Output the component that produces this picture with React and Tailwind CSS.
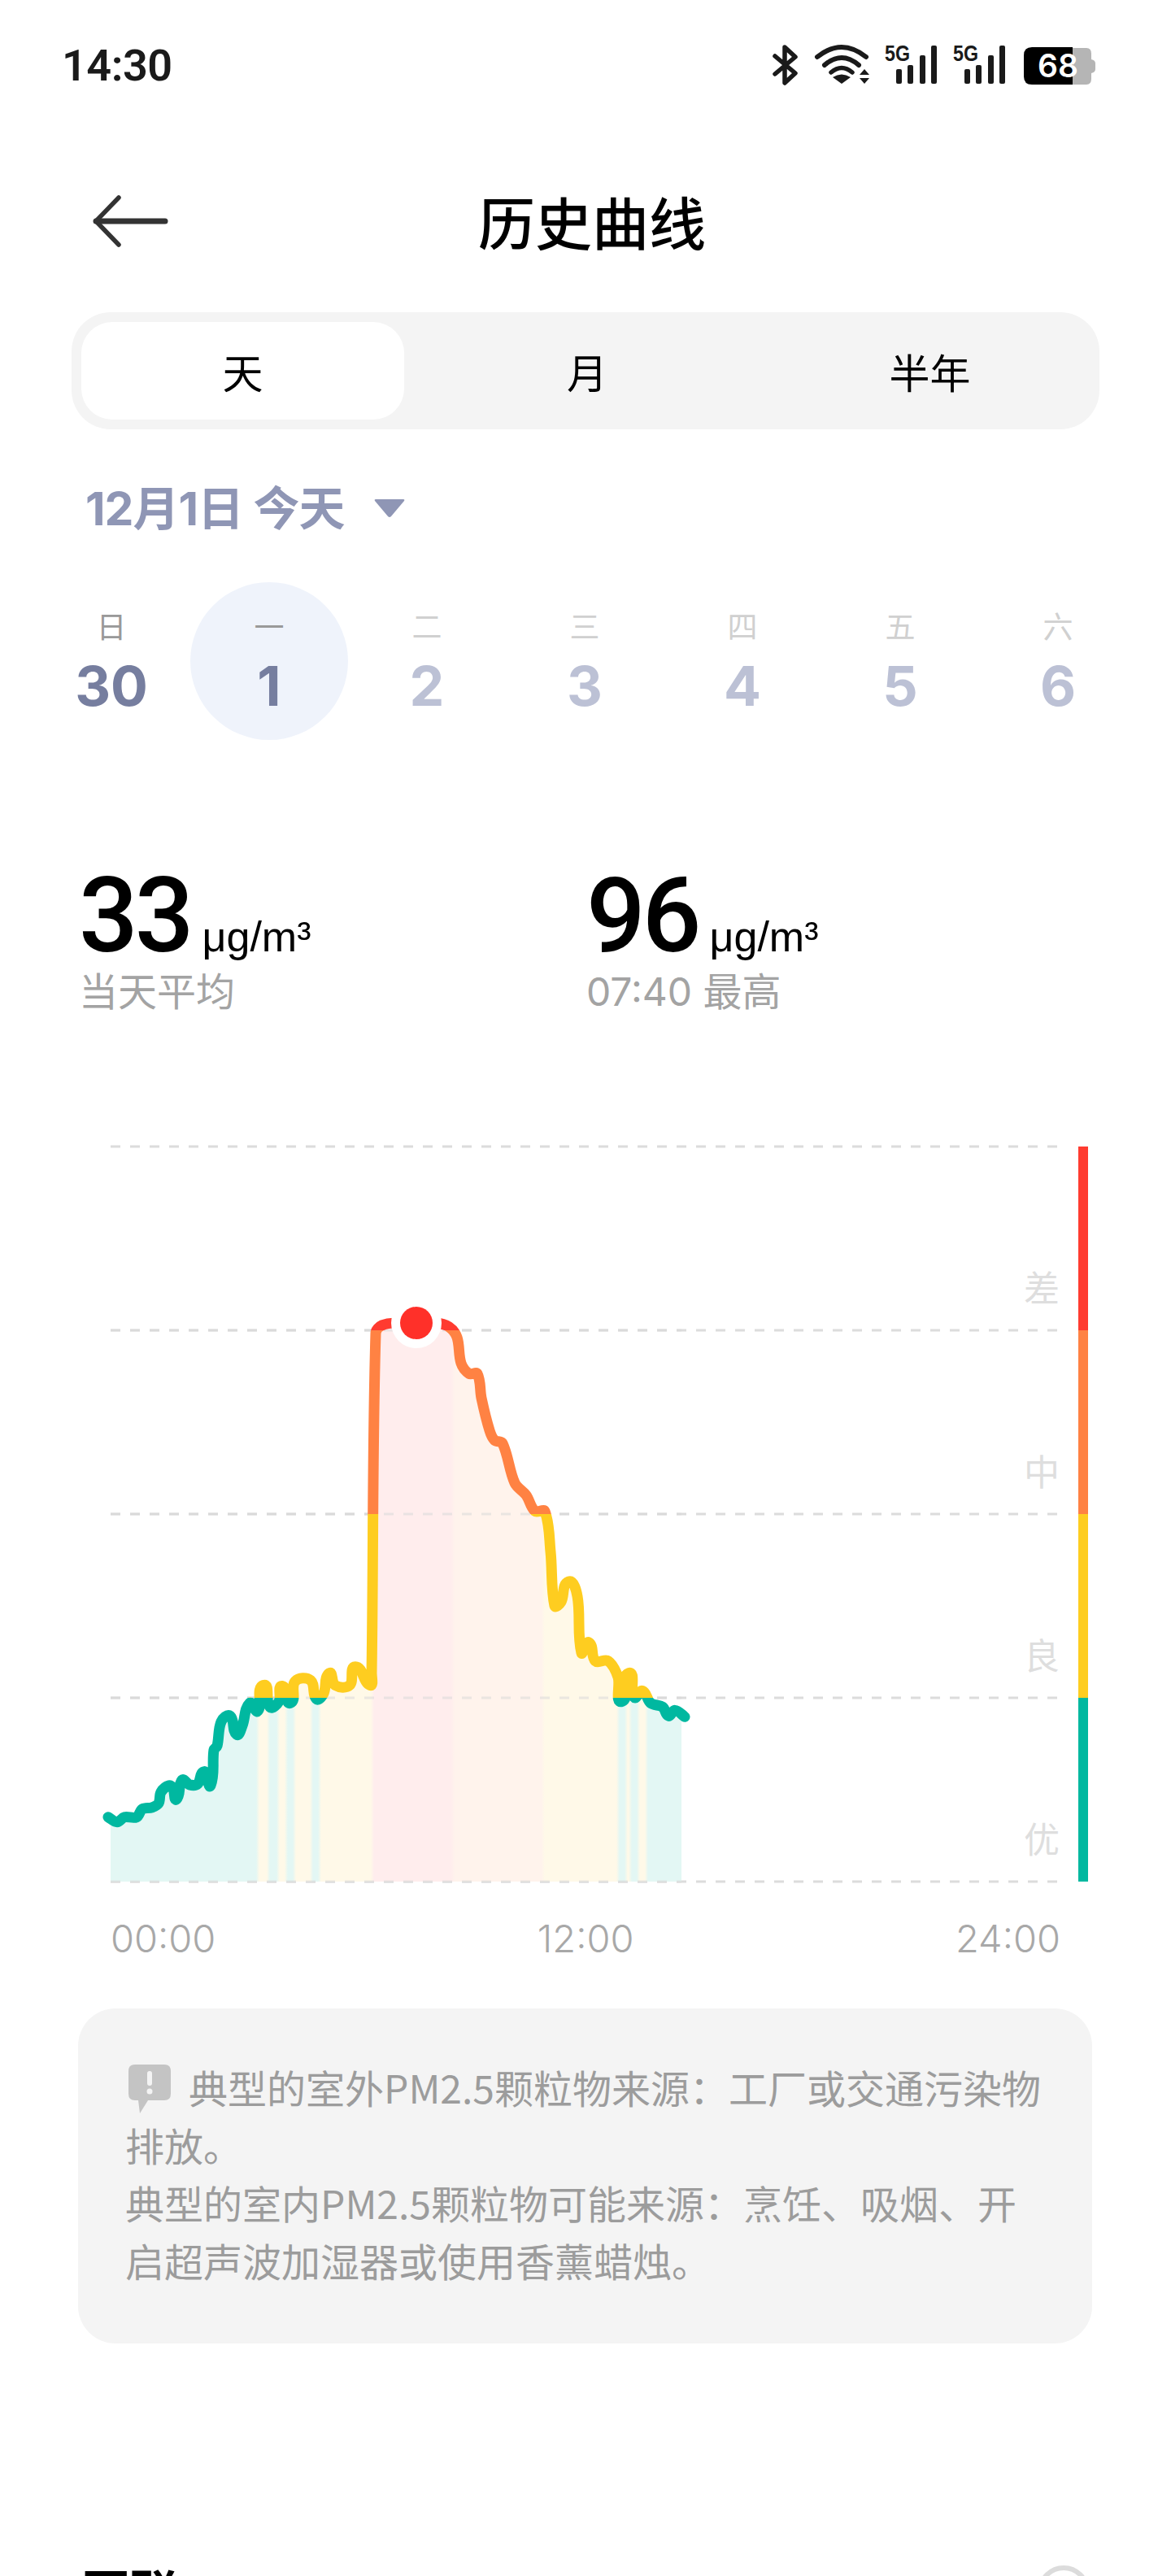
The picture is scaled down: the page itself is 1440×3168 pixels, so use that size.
import { useMemo } from "react"

const weekDays = [
  { label: "日", num: "30", past: true },
  { label: "一", num: "1", past: true, selected: true },
  { label: "二", num: "2" },
  { label: "三", num: "3" },
  { label: "四", num: "4" },
  { label: "五", num: "5" },
  { label: "六", num: "6" },
]

// curve points read off the reference, y squeezed a little to fit the 226px grid
const curve = [
  [133, 2238], [144, 2244], [153, 2238], [168, 2238], [175, 2228], [187, 2226], [195, 2221], [198, 2207],
  [208, 2199], [213, 2203], [217, 2216], [224, 2192], [233, 2198], [243, 2197], [248, 2184], [252, 2182],
  [259, 2199], [263, 2155], [267, 2150], [272, 2120], [283, 2113], [291, 2136], [298, 2125], [307, 2097],
  [317, 2107], [324, 2075], [332, 2102], [343, 2095], [347, 2076], [357, 2097], [363, 2070], [382, 2069],
  [389, 2092], [398, 2085], [405, 2060], [412, 2075], [430, 2075], [437, 2052], [455, 2075], [457, 2060],
  [462, 1640], [470, 1630], [490, 1627], [535, 1627], [552, 1632], [562, 1645], [567, 1677], [577, 1690],
  [587, 1690], [592, 1720], [602, 1760], [608, 1772], [618, 1776], [633, 1825], [647, 1840], [658, 1860],
  [670, 1860], [677, 1910], [682, 1977], [690, 1972], [699, 1947], [710, 1965], [715, 2035], [724, 2022],
  [732, 2045], [748, 2045], [760, 2065], [765, 2095], [773, 2060], [780, 2090], [790, 2082], [800, 2097],
  [815, 2102], [822, 2113], [830, 2106], [842, 2114],
].map(([x, y]) => [x, 1580 + (y - 1580) * 0.995])

const TEAL = "#e3f7f4"
const YELLOW = "#fff9e8"
const RED = "#ffeded"
const ORANGE = "#fff3ec"

const areaBands = [
  [136, 317, TEAL], [317, 330, YELLOW], [330, 342, TEAL], [342, 352, YELLOW], [352, 362, TEAL],
  [362, 383, YELLOW], [383, 393, TEAL], [393, 458, YELLOW], [458, 557, RED], [557, 668, ORANGE],
  [668, 760, YELLOW], [760, 770, TEAL], [770, 775, YELLOW], [775, 785, TEAL], [785, 795, YELLOW],
  [795, 838, TEAL],
]

const levels = [
  { top: 1410, stroke: "#ff3b30", name: "差" },
  { top: 1636, stroke: "#ff8243", name: "中" },
  { top: 1862, stroke: "#fecd20", name: "良" },
  { top: 2088, stroke: "#00b8a0", name: "优" },
]

const gridLines = [1410, 1636, 1862, 2088, 2314]

function smoothPath(pts) {
  const dir = (i) => {
    const a = pts[Math.max(i - 1, 0)]
    const b = pts[Math.min(i + 1, pts.length - 1)]
    const dx = b[0] - a[0]
    const dy = b[1] - a[1]
    const len = Math.hypot(dx, dy) || 1
    return [dx / len, dy / len]
  }
  let d = `M${pts[0][0]},${pts[0][1]}`
  for (let i = 0; i < pts.length - 1; i++) {
    const p = pts[i]
    const q = pts[i + 1]
    const len = Math.hypot(q[0] - p[0], q[1] - p[1]) / 3
    const d0 = dir(i)
    const d1 = dir(i + 1)
    d += ` C${p[0] + d0[0] * len},${p[1] + d0[1] * len} ${q[0] - d1[0] * len},${q[1] - d1[1] * len} ${q[0]},${q[1]}`
  }
  return d
}

function StatusIcons() {
  const bars = [[1102, 85], [1116, 80], [1131, 68], [1145, 56]]
  return (
    <svg width="410" height="60" viewBox="940 50 410 60">
      <path d="M953 69 L978 90 L965 102 L965 58 L978 70 L953 91" fill="none" stroke="#1a1a1a" strokeWidth="5.5" strokeLinecap="round" strokeLinejoin="round" />
      <g fill="none" stroke="#1a1a1a" strokeWidth="6" strokeLinecap="round">
        <path d="M1005 70 Q1035 46 1065 70" />
        <path d="M1014 80 Q1035 62 1056 80" />
      </g>
      <path d="M1022 89 Q1035 78 1048 89" fill="none" stroke="#1a1a1a" strokeWidth="5.5" strokeLinecap="round" />
      <path d="M1024 95 Q1035 88 1046 95 L1035 103 Z" fill="#1a1a1a" />
      <path d="M1063 85 L1069 92 L1057 92 Z M1057 96 L1069 96 L1063 103 Z" fill="#1a1a1a" />
      {[0, 84].map((dx) => (
        <g key={dx} fill="#1a1a1a">
          <text x={1088 + dx} y="75" fontFamily="'Liberation Sans', sans-serif" fontWeight="700" fontSize="28" textLength="31" lengthAdjust="spacingAndGlyphs">5G</text>
          {bars.map(([x, top]) => (
            <rect key={x} x={x + dx} y={top} width="7" height={103 - top} rx="2" />
          ))}
        </g>
      ))}
      <path d="M1310 59 H1336 Q1342 59 1342 66 V73 Q1347 74 1347 78 V85 Q1347 89 1342 90 V97 Q1342 104 1336 104 H1310 Z" fill="#b5b5b5" />
      <path d="M1319 58 H1269 Q1259 58 1259 68 V94 Q1259 104 1269 104 H1319 Z" fill="#000" />
      <text x="1301" y="95" textAnchor="middle" fill="#fff" fontFamily="Inter, sans-serif" fontWeight="600" fontSize="39">68</text>
    </svg>
  )
}

function HistoryChart() {
  const linePath = useMemo(() => smoothPath(curve), [])
  const areaPath = `${linePath} L838,2110 L838,2314 L136,2314 L136,2236 Z`
  const span = 838 - 136

  return (
    <svg width="1440" height="930" viewBox="0 1400 1440 930" className="block">
      <defs>
        <linearGradient id="areaFill" gradientUnits="userSpaceOnUse" x1="136" x2="838" y1="0" y2="0">
          {areaBands.flatMap(([a, b, color]) => [
            <stop key={`${a}a`} offset={(a + 2 - 136) / span} stopColor={color} />,
            <stop key={`${a}b`} offset={(b - 2 - 136) / span} stopColor={color} />,
          ])}
        </linearGradient>
        <clipPath id="band0"><rect x="100" y="1500" width="800" height="136" /></clipPath>
        <clipPath id="band1"><rect x="100" y="1636" width="800" height="226" /></clipPath>
        <clipPath id="band2"><rect x="100" y="1862" width="800" height="226" /></clipPath>
        <clipPath id="band3"><rect x="100" y="2088" width="800" height="300" /></clipPath>
      </defs>

      {gridLines.map((y) => (
        <line key={y} x1="136" x2="1300" y1={y} y2={y} stroke="#dcdcdc" strokeWidth="3" strokeDasharray="12 12" />
      ))}
      <path d={areaPath} fill="url(#areaFill)" />
      {gridLines.slice(1).map((y) => (
        <line key={y} x1="136" x2="838" y1={y} y2={y} stroke="#d8d8d8" strokeOpacity="0.55" strokeWidth="3" strokeDasharray="12 12" />
      ))}

      {levels.map((l, i) => (
        <g key={l.name} clipPath={`url(#band${i})`}>
          <path d={linePath} fill="none" stroke={l.stroke} strokeWidth="13" strokeLinecap="round" strokeLinejoin="round" />
        </g>
      ))}

      <circle cx="512" cy="1627" r="31" fill="#fff" />
      <circle cx="512" cy="1627" r="20" fill="#ff3029" />

      {levels.map((l) => (
        <g key={l.name}>
          <rect x="1326" y={l.top} width="12" height="226" fill={l.stroke} />
          <text x="1281" y={l.top + 191} textAnchor="middle" fill="#dedede" fontSize="44" fontFamily="'Noto Sans CJK SC', sans-serif">{l.name}</text>
        </g>
      ))}
    </svg>
  )
}

export default function App() {
  return (
    <div className="relative w-[1440px] h-[3168px] overflow-hidden bg-white text-black font-['Inter','Noto_Sans_CJK_SC',sans-serif]">
      {/* status bar */}
      <div className="mt-[50px] h-[60px] flex items-center justify-between pl-[76px] pr-[90px]">
        <span className="text-[54px] font-semibold tracking-[-0.5px] text-[#1a1a1a] font-['Roboto',sans-serif]">14:30</span>
        <StatusIcons />
      </div>

      {/* header */}
      <div className="relative mt-[122px] h-[80px] pl-[16px] flex items-center justify-center">
        <svg className="absolute left-[110px] top-[5px]" width="100" height="70" viewBox="110 237 100 70" fill="none" stroke="#333" strokeLinecap="round" strokeLinejoin="round">
          <path d="M118 272 H203" strokeWidth="7" />
          <path d="M146 243 L118 272 L146 301" strokeWidth="5.5" />
        </svg>
        <h1 className="text-[70px] font-medium leading-none font-['Noto_Sans_CJK_SC',sans-serif]">历史曲线</h1>
      </div>

      {/* range tabs */}
      <div className="mt-[72px] mx-[88px] w-[1264px] h-[144px] rounded-[48px] bg-[#f4f4f4] p-[12px] flex text-[50px] font-['Noto_Sans_CJK_SC',sans-serif]">
        <div className="w-[397px] h-[120px] rounded-[38px] bg-white flex items-center justify-center">天</div>
        <div className="w-[450px] flex items-center justify-center">月</div>
        <div className="flex-1 flex items-center justify-center">半年</div>
      </div>

      {/* date picker */}
      <div className="mt-[67px] ml-[105px] h-[60px] flex items-center text-[#8f96b5]">
        <span className="text-[57px] font-bold tracking-[-1px] leading-none">12月1日 今天</span>
        <svg className="ml-[36px]" width="38" height="24" viewBox="0 0 38 24">
          <path d="M2 1 H36 Q38 1 37 3 L21 22 Q19 24 17 22 L1 3 Q0 1 2 1 Z" fill="#8f96b5" />
        </svg>
      </div>

      {/* week strip */}
      <div className="mt-[61px] px-[40px] flex">
        {weekDays.map((d) => (
          <div key={d.num} className="w-[194px] h-[194px] flex justify-center">
            <div className={`w-[194px] h-[194px] rounded-full flex flex-col items-center pt-[36px] ${d.selected ? "bg-[#eff3fb]" : ""}`}>
              <span className={`h-[40px] text-[37px] leading-[40px] ${d.past ? "text-[#999999]" : "text-[#d0d0d0]"}`}>{d.label}</span>
              <span className={`mt-[19px] h-[64px] text-[68px] leading-[64px] font-bold ${d.past ? "text-[#767e9f]" : "text-[#bcc1d5]"}`}>{d.num}</span>
            </div>
          </div>
        ))}
      </div>

      {/* daily figures */}
      <div className="mt-[152px] pl-[97px] flex">
        {[
          { value: "33", note: "当天平均" },
          { value: "96", note: "07:40 最高" },
        ].map((s) => (
          <div key={s.value} className="w-[624px]">
            <div className="flex items-baseline h-[128px]">
              <span className="text-[128px] leading-[128px] font-medium tracking-[-4px] font-['Roboto',sans-serif]">{s.value}</span>
              <span className="ml-[14px] text-[52px] leading-none font-['Liberation_Sans',sans-serif]">μg/m³</span>
            </div>
            <div className="mt-[5px] h-[50px] text-[48px] leading-[50px] text-[#a3a3a3]">{s.note}</div>
          </div>
        ))}
      </div>

      {/* chart */}
      <div className="mt-[155px]">
        <HistoryChart />
      </div>

      <div className="mt-[26px] h-[56px] pl-[136px] pr-[136px] flex items-center justify-between text-[47px] font-light text-[#a8a8a8]">
        <span>00:00</span>
        <span>12:00</span>
        <span>24:00</span>
      </div>

      {/* tips card */}
      <div className="mt-[58px] ml-[96px] w-[1247px] h-[412px] rounded-[46px] bg-[#f4f4f4] pt-[61px] pl-[58px] pr-[58px] text-[48px] leading-[71px] text-[#9c9c9c] font-['Noto_Sans_CJK_SC',sans-serif]">
        <p>
          <svg className="inline-block align-baseline mr-[22px] ml-[4px] -mb-[12px]" width="52" height="60" viewBox="0 0 52 60">
            <path d="M8 0 H44 Q52 0 52 8 V36 Q52 44 44 44 H24 L14 60 L12 44 H8 Q0 44 0 36 V8 Q0 0 8 0 Z" fill="#c4c4c4" />
            <rect x="23" y="8" width="6" height="18" rx="3" fill="#f4f4f4" />
            <circle cx="26" cy="33" r="3.5" fill="#f4f4f4" />
          </svg>
          典型的室外PM2.5颗粒物来源：工厂或交通污染物排放。
          <br />
          典型的室内PM2.5颗粒物可能来源：烹饪、吸烟、开启超声波加湿器或使用香薰蜡烛。
        </p>
      </div>

      {/* next section, cut off by the bottom of the screen */}
      <div className="mt-[273px] pl-[100px] pr-[100px] flex items-start justify-between">
        <span className="text-[60px] leading-none font-bold font-['Noto_Sans_CJK_SC',sans-serif]">互联</span>
        <div className="w-[64px] h-[64px] rounded-full border-[6px] border-[#dcdcdc]" />
      </div>
    </div>
  )
}
